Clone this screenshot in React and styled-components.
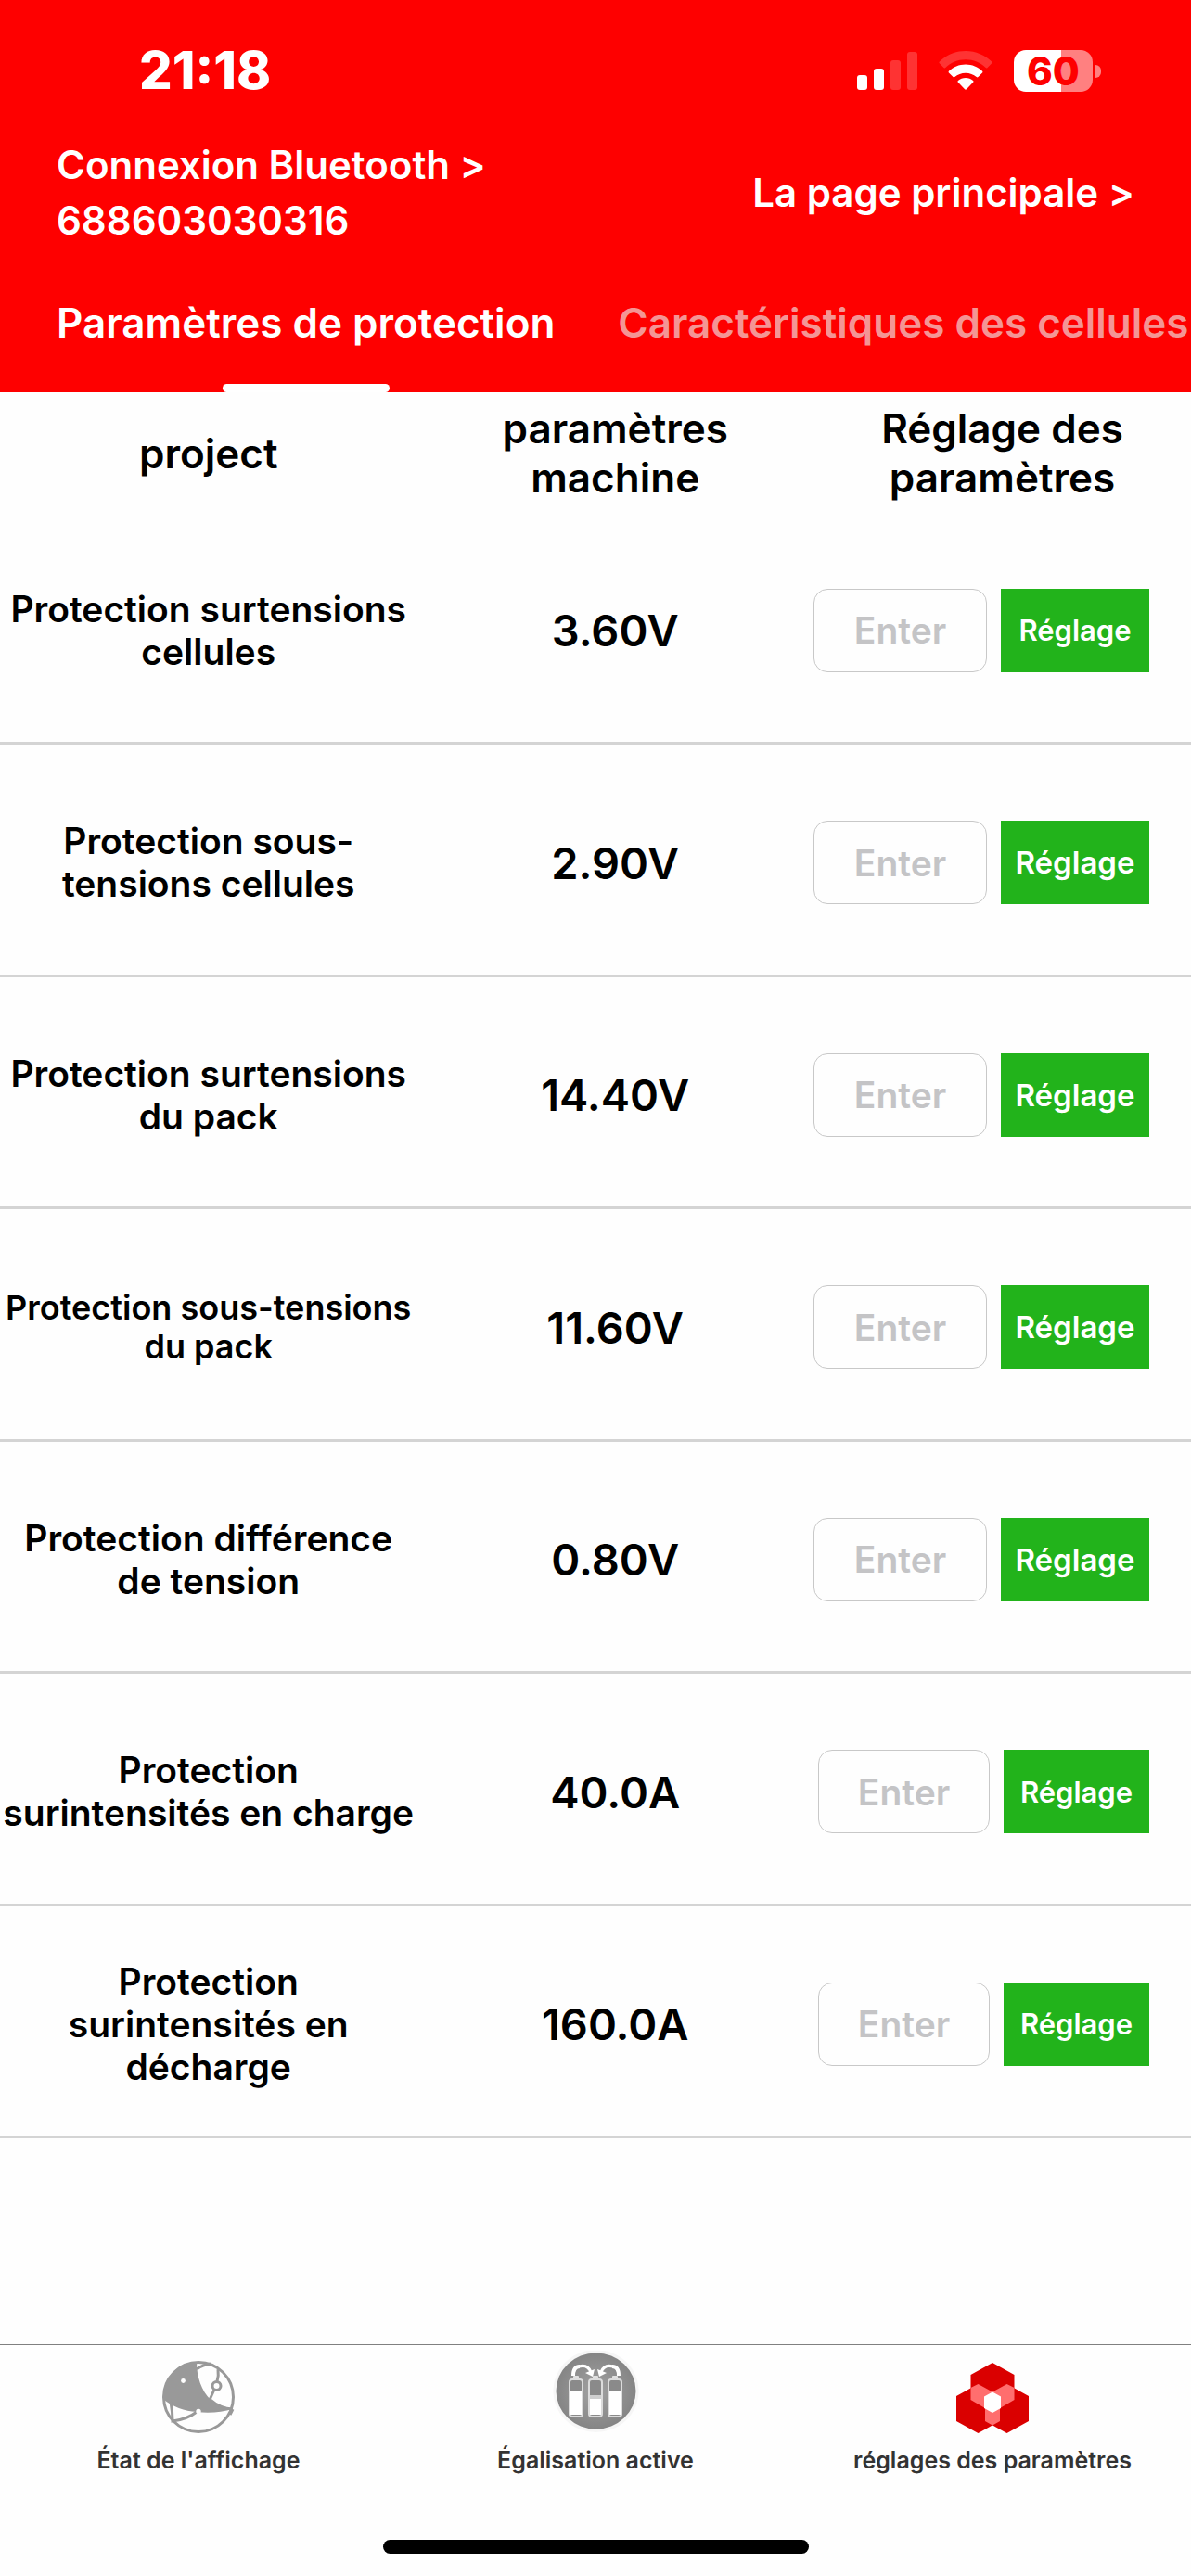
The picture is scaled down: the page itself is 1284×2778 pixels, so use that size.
import styled, { createGlobalStyle } from "styled-components";

const GlobalStyle = createGlobalStyle`
    * {
        box-sizing: border-box;
    }

    body {
        margin: 0;
        background: #fefefe;
        color: #000;
        font-family: Inter, "Liberation Sans", sans-serif;
        font-weight: 600;
    }

    button, input {
        font: inherit;
    }
`

const Page = styled.div`
    display: flex;
    flex-direction: column;
    min-height: 100vh;
    overflow-x: hidden;
`

const Header = styled.header`
    background: #fe0000;
    color: #fff;
`

const StatusBar = styled.div`
    display: flex;
    align-items: center;
    justify-content: space-between;
    height: 142px;
    padding: 10px 106px 0 150px;
`

const Clock = styled.time`
    font-size: 56px;
    font-weight: 800;
    line-height: 60px;
`

const StatusIcons = styled.div`
    display: flex;
    align-items: center;
    gap: 23px;
`

const Battery = styled.div`
    position: relative;
    width: 85px;
    height: 45px;
    border-radius: 13px;
    background: linear-gradient(to right, #fff 60%, #ff8080 60%);
    color: #fe0000;
    font-size: 42px;
    font-weight: 800;
    line-height: 46px;
    text-align: center;

    &::after {
        content: "";
        position: absolute;
        top: 16px;
        left: 88px;
        width: 6px;
        height: 14px;
        border-radius: 0 6px 6px 0;
        background: #ff8080;
    }
`

const Links = styled.div`
    display: flex;
    align-items: center;
    justify-content: space-between;
    height: 132px;
    padding: 0 61px;
`

const HeaderLink = styled.a`
    color: inherit;
    font-size: 42px;
    line-height: 60px;
    text-decoration: none;
    white-space: pre-line;
`

const Tabs = styled.nav`
    display: flex;
    gap: 68px;
    height: 149px;
    padding-left: 61px;
`

const Tab = styled.a`
    display: flex;
    flex-direction: column;
    align-items: center;
    justify-content: space-between;
    padding-top: 46px;
    color: ${(props) => (props.$active ? "#fff" : "#f49595")};
    font-size: 44px;
    line-height: 56px;
    text-decoration: none;
    white-space: nowrap;

    &::after {
        content: "";
        width: 180px;
        height: 9px;
        border-radius: 5px;
        background: ${(props) => (props.$active ? "#fff" : "transparent")};
    }
`

const Table = styled.table`
    width: 100%;
    table-layout: fixed;
    border-collapse: separate;
    border-spacing: 0;
    text-align: center;

    th, td {
        padding: 0;
        vertical-align: middle;
        white-space: pre-line;
    }

    thead th {
        height: 130px;
        padding-top: 2px;
        font-size: 44px;
        font-weight: 600;
        line-height: 53px;
    }

    tbody th, tbody td {
        height: 250px;
        padding-top: 6px;
        border-bottom: 3px solid #d4d4d4;
    }

    tbody tr:nth-child(even) > * {
        height: 251px;
    }
`

const Col = styled.col`
    width: ${(props) => props.$width};
`

const Name = styled.th`
    font-size: ${(props) => (props.$small ? 36 : 39)}px;
    font-weight: 600;
    line-height: ${(props) => (props.$small ? 42 : 46)}px;
`

const Value = styled.td`
    font-size: 47px;
`

const Controls = styled.form`
    display: flex;
    gap: 15px;
    height: 90px;
    padding-right: 45px;
    padding-left: ${(props) => (props.$compact ? 5 : 0)}px;
`

const Field = styled.input`
    flex: 1;
    min-width: 0;
    padding: 0;
    border: 1px solid #c8c8c8;
    border-radius: 15px;
    background: transparent;
    font-size: 39px;
    text-align: center;

    &::placeholder {
        color: #c4c4c6;
        opacity: 1;
    }
`

const SetButton = styled.button`
    width: ${(props) => (props.$compact ? 157 : 160)}px;
    padding: 0;
    border: 0;
    background: #22b31b;
    color: #fff;
    font-size: ${(props) => (props.$small ? 31 : 33)}px;
`

const TabBar = styled.nav`
    display: grid;
    grid-template-columns: repeat(3, 1fr);
    height: 211px;
    margin-top: auto;
    border-top: 1px solid #808080;
`

const TabBarItem = styled.a`
    display: flex;
    flex-direction: column;
    align-items: center;
    color: #333;
    font-size: 25px;
    line-height: 30px;
    text-decoration: none;
    white-space: nowrap;
`

const IconBox = styled.span`
    display: flex;
    align-items: flex-end;
    height: 95px;
    margin-bottom: 14px;
`

const HomeIndicator = styled.div`
    width: 459px;
    height: 15px;
    margin: 0 auto 24px;
    border-radius: 8px;
    background: #000;
`

const SignalIcon = () => (
    <svg width="65" height="42" viewBox="0 0 65 42" fill="#fff">
        <rect x="0" y="26" width="11" height="16" rx="3" />
        <rect x="18" y="19" width="11" height="23" rx="3" />
        <rect x="36" y="10" width="11" height="32" rx="3" opacity="0.2" />
        <rect x="54" y="1" width="11" height="41" rx="3" opacity="0.2" />
    </svg>
)

const WifiIcon = () => (
    <svg width="58" height="42" viewBox="0 0 58 42" fill="#fff">
        <path opacity="0.2" d="M29 0C18 0 8 4.500 .8 11.500Q0 12.400 .8 13.300L5.700 18.200Q6.500 18.800 7.300 18.100C13 12.600 20.600 9.300 29 9.300S45 12.600 50.700 18.100Q51.500 18.800 52.300 18.200L57.200 13.300Q58 12.400 57.200 11.500C50 4.500 40 0 29 0Z" />
        <path d="M29 14.600C22 14.600 15.600 17.400 10.900 21.800Q10.100 22.700 10.900 23.500L15.500 28.100Q16.400 28.800 17.300 28.100C20.400 25.400 24.500 23.700 29 23.700S37.600 25.400 40.700 28.100Q41.600 28.800 42.500 28.100L47.100 23.500Q47.900 22.700 47.100 21.800C42.400 17.400 36 14.600 29 14.600Z" />
        <path d="M29 29C25.900 29 23.100 30.100 20.900 31.900Q20 32.800 20.900 33.700L28.100 41.300Q29 42.200 29.900 41.300L37.100 33.700Q38 32.800 37.100 31.900C34.900 30.100 32.100 29 29 29Z" />
    </svg>
)

const GlobeIcon = () => (
    <svg width="78" height="78" viewBox="0 0 78 78" fill="none" stroke="#999" strokeWidth="3">
        <circle cx="39" cy="39" r="37.500" />
        <path fill="#999" stroke="none" d="M37 1C16 2 0 19 1 41C11 50 24 54 37 55C52 57 64 55 76 52C70 50 58 48 52 42C42 32 37 17 37 1Z" />
        <path d="M37 9Q44 4 52 3M60 9Q61 16 59 22M56 31L51 42M9 44Q11 55 11 65Q27 63 37 55M52 42Q62 51 76 52M76 52L73 58" />
        <circle cx="58.500" cy="27" r="4.500" fill="#fefefe" />
        <circle cx="39" cy="54.500" r="2.700" fill="#fefefe" stroke="none" />
        <circle cx="22.500" cy="21.500" r="2.400" fill="#fefefe" stroke="none" />
    </svg>
)

const Cell = ({ x, level }) => (
    <g>
        <rect x={x + 4} y="27" width="6" height="4" rx="1" fill="#e0e0e0" />
        <rect x={x} y="31" width="14" height="40" rx="3" fill="#8a8a8a" stroke="#dcdcdc" strokeWidth="2" />
        <rect x={x + 1} y={level} width="12" height={69 - level} fill="#fff" />
    </g>
)

const CellsIcon = () => (
    <svg width="93" height="89" viewBox="0 0 93 89">
        <defs>
            <radialGradient id="disc">
                <stop offset="0" stopColor="#a2a2a2" />
                <stop offset="1" stopColor="#858585" />
            </radialGradient>
        </defs>
        <ellipse cx="46.500" cy="43.500" rx="46" ry="44.500" fill="#f6f6f6" />
        <ellipse cx="46.500" cy="43.500" rx="43" ry="41" fill="url(#disc)" />
        <Cell x={18} level={43} />
        <Cell x={39} level={52} />
        <Cell x={60} level={43} />
        <rect x="40" y="48" width="12" height="4" fill="#cfcfcf" />
        <g fill="none" stroke="#fff" strokeWidth="3">
            <path strokeWidth="4" d="M22 27C22 20 25 17 29 17" />
            <path d="M28 17C35 15 39 18 41 23" />
            <path strokeWidth="4" d="M71 27C71 20 68 17 64 17" />
            <path d="M65 17C58 15 54 18 52 23" />
        </g>
        <path fill="#fff" d="M35 24L45 20L43 28ZM58 24L48 20L50 28Z" />
    </svg>
)

const HexIcon = () => (
    <svg width="78" height="76" viewBox="0 0 78 76">
        <g fill="#da0000">
            <path d="M39 0L62.500 13V40L39 54L15.500 40V13Z" />
            <path d="M23.500 23L47 36V63L23.500 76L0 63V36Z" />
            <path d="M54.500 23L78 36V63L54.500 76L31 63V36Z" />
        </g>
        <path fill="#ff6e6e" d="M15.500 27L23.500 23L39 31.500L54.500 23L62.500 27V40L47 49V63L39 67.500L31 63V49L15.500 40Z" />
        <path fill="#fff" d="M39 31.500L48 36.500V49L39 54L30 49V36.500Z" />
    </svg>
)

const parameters = [
    { name: "Protection surtensions\ncellules", value: "3.60V", smallButton: true },
    { name: "Protection sous-\ntensions cellules", value: "2.90V" },
    { name: "Protection surtensions\ndu pack", value: "14.40V" },
    { name: "Protection sous-tensions\ndu pack", value: "11.60V", smallName: true },
    { name: "Protection différence\nde tension", value: "0.80V" },
    { name: "Protection\nsurintensités en charge", value: "40.0A", smallButton: true, compact: true },
    { name: "Protection\nsurintensités en\ndécharge", value: "160.0A", smallButton: true, compact: true },
]

const App = () => {
    return (
        <Page>
            <GlobalStyle />
            <Header>
                <StatusBar>
                    <Clock>21:18</Clock>
                    <StatusIcons>
                        <SignalIcon />
                        <WifiIcon />
                        <Battery>60</Battery>
                    </StatusIcons>
                </StatusBar>
                <Links>
                    <HeaderLink href="#bluetooth">{"Connexion Bluetooth >\n688603030316"}</HeaderLink>
                    <HeaderLink href="#main">{"La page principale >"}</HeaderLink>
                </Links>
                <Tabs>
                    <Tab href="#protection" $active>Paramètres de protection</Tab>
                    <Tab href="#cells">Caractéristiques des cellules</Tab>
                </Tabs>
            </Header>
            <Table>
                <colgroup>
                    <Col $width="35%" />
                    <Col />
                    <Col $width="407px" />
                </colgroup>
                <thead>
                    <tr>
                        <th scope="col">project</th>
                        <th scope="col">{"paramètres\nmachine"}</th>
                        <th scope="col">{"Réglage des\nparamètres"}</th>
                    </tr>
                </thead>
                <tbody>
                    {parameters.map(({ name, value, smallName, smallButton, compact }) => (
                        <tr key={name}>
                            <Name scope="row" $small={smallName}>{name}</Name>
                            <Value>{value}</Value>
                            <td>
                                <Controls $compact={compact} onSubmit={(e) => e.preventDefault()}>
                                    <Field type="text" placeholder="Enter" aria-label={name} />
                                    <SetButton type="submit" $small={smallButton} $compact={compact}>Réglage</SetButton>
                                </Controls>
                            </td>
                        </tr>
                    ))}
                </tbody>
            </Table>
            <TabBar>
                <TabBarItem href="#status">
                    <IconBox><GlobeIcon /></IconBox>
                    État de l'affichage
                </TabBarItem>
                <TabBarItem href="#balancing">
                    <IconBox><CellsIcon /></IconBox>
                    Égalisation active
                </TabBarItem>
                <TabBarItem href="#settings">
                    <IconBox><HexIcon /></IconBox>
                    réglages des paramètres
                </TabBarItem>
            </TabBar>
            <HomeIndicator />
        </Page>
    );
}

export default App;
